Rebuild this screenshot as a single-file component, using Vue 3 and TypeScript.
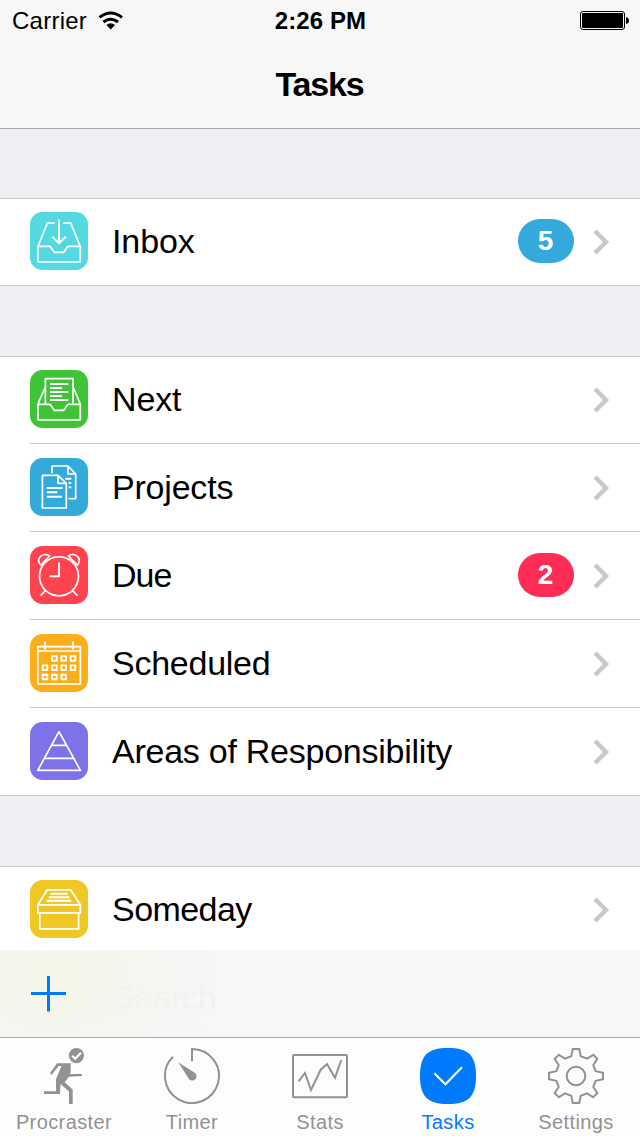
<script setup lang="ts">
interface Row {
  label: string
  color: string
  strokes: string
  bold?: string
  spacing: string
  badge?: number
  badgeColor?: string
}

const tray = 'M8 34.3H20L24.3 40.3H33.7L38 34.3H50.3V49.8H8Z'

const calendarCells = [
  [24.4, 24.4], [33.7, 24.4], [43, 24.4],
  [15, 33.7], [24.4, 33.7], [33.7, 33.7], [43, 33.7],
  [15, 43], [24.4, 43], [33.7, 43],
]
  .map(([x, y]) => `M${x - 2.3} ${y - 2.3}h4.6v4.6h-4.6Z`)
  .join('')

const groups: Row[][] = [
  [
    {
      label: 'Inbox', color: '#54d9e0', spacing: '-0.1px', badge: 5, badgeColor: '#34aadc',
      strokes: tray + 'M8 34.3L17.3 11.2H24.7M33.3 11.2H40.7L50.3 34.3',
      bold: 'M29 7.5V31M22.3 24.7L29 31.4L35.7 24.7',
    },
  ],
  [
    {
      label: 'Next', color: '#3fc438', spacing: '-0.15px',
      strokes: tray + 'M15.4 33.5V8.7H43V33.5M8 34L15.2 17M50.3 34L43.2 17',
      bold: 'M20 14H38.3M20 18H32M20 22H38.3M20 26H32M20 30H38.3',
    },
    {
      label: 'Projects', color: '#34aadc', spacing: '-0.2px',
      strokes: 'M12.4 17.3H28L36.3 25.3V50H12.4ZM28 17.3V25.3H36.3M22 15V8H38L45.7 16V40.7H38.7M38 8V16H45.7',
      bold: 'M16.8 30H32.5M16.8 34.3H27.3M16.8 38.7H32M35.3 20.7H41.3M38.7 25H41.3M38.7 29.3H41.3',
    },
    {
      label: 'Due', color: '#ff4450', spacing: '-1px', badge: 2, badgeColor: '#ff2d55',
      strokes:
        'M9.5 30.3a19.5 19.5 0 1 0 39 0a19.5 19.5 0 1 0 -39 0M16 44L10.6 49.7M42 44L47.4 49.7' +
        'M10.7 19.2C8.3 16.5 7.8 12.8 10.3 10.7C12.8 8 17 7.8 19.5 10Z' +
        'M47.3 19.2C49.7 16.5 50.2 12.8 47.7 10.7C45.2 8 41 7.8 38.5 10Z',
      bold: 'M29 16.5V30.3H19.5',
    },
    {
      label: 'Scheduled', color: '#ffae1b', spacing: '-0.25px',
      strokes: 'M7.9 12.7H50.4V49.8H7.9ZM7.9 17H50.4',
      bold: 'M15 7.5V15.5M43 7.5V15.5' + calendarCells,
    },
    {
      label: 'Areas of Responsibility', color: '#7d73e8', spacing: '-0.25px',
      strokes: 'M29 9.7L50.4 48.3H7.8ZM21.6 23.4H36.4M14.4 36.4H43.6',
    },
  ],
  [
    {
      label: 'Someday', color: '#efc825', spacing: '-0.55px',
      strokes: 'M7.9 24.8L17.3 9.8H40.7L50.3 24.8V32.8H7.9ZM7.9 24.8H50.3M9.8 32.8V48.8H48.6V32.8',
      bold: 'M20.3 13.7H37.7M18.7 17.2H39.3M16.7 20.7H41.3',
    },
  ],
]
</script>

<template>
  <div class="screen">
    <header class="header">
      <div class="status">
        <div class="carrier">
          <span>Carrier</span>
          <svg class="wifi" width="26" height="20" viewBox="0 0 26 20">
            <path d="M1.4 6.4Q12.7-2.4 24 6.4M5.4 11Q12.7 5.4 20 11" fill="none" stroke="#000" stroke-width="3" />
            <path d="M8.4 14Q12.7 10.6 17 14L12.7 18.6Z" />
          </svg>
        </div>
        <span class="clock">2:26 PM</span>
        <svg class="battery" width="50" height="20" viewBox="0 0 50 20">
          <rect x=".5" y=".5" width="44" height="18" rx="2.5" fill="none" stroke="#000" />
          <rect x="2" y="2" width="41" height="15" rx="1" />
          <path d="M46 6Q49 6.5 49 9.5T46 13Z" />
        </svg>
      </div>
      <h1 class="title">Tasks</h1>
    </header>

    <main class="list">
      <section v-for="(rows, g) in groups" :key="g" class="group">
        <div v-for="row in rows" :key="row.label" class="row">
          <svg class="icon" width="58" height="58" viewBox="0 0 58 58">
            <rect width="58" height="58" rx="12.5" :fill="row.color" />
            <path :d="row.strokes" class="thin" />
            <path v-if="row.bold" :d="row.bold" class="bold" />
          </svg>
          <div class="line">
            <span class="label" :style="{ letterSpacing: row.spacing }">{{ row.label }}</span>
            <span v-if="row.badge" class="badge" :style="{ background: row.badgeColor }">{{ row.badge }}</span>
            <svg class="chevron" width="18" height="26" viewBox="0 0 18 26">
              <path d="M2 2L13 13L2 24" fill="none" stroke="#c7c7cc" stroke-width="4.4" />
            </svg>
          </div>
        </div>
      </section>
    </main>

    <div class="toolbar">
      <svg class="plus" width="36" height="36" viewBox="0 0 36 36">
        <path d="M17.5 0V35.5M0 17.5H35" stroke="#007aff" stroke-width="3" />
      </svg>
      <span class="ghost">Search</span>
    </div>

    <nav class="tabs">
      <div class="tab">
        <svg width="56" height="56" viewBox="0 0 56 56">
          <path fill="#929292" d="M21 15.3H34.7V24.5L33.6 26H46V28L33 28.8L28.7 34.2L36.7 41.5V56H33V43.5L24.5 36L24 46H8V43.3H20V31L25.5 18H22.6L15.5 27L14 25.3Z" />
          <circle cx="40.4" cy="7.6" r="7.6" fill="#929292" />
          <path d="M36.2 7.8L39.2 10.8L45 4.8" fill="none" stroke="#fff" stroke-width="2.2" />
        </svg>
        <span class="name wide">Procraster</span>
      </div>
      <div class="tab">
        <svg width="56" height="56" viewBox="0 0 56 56">
          <path d="M28 13.3V1A27 27 0 1 1 9 8.8" fill="none" stroke="#929292" stroke-width="2" />
          <path d="M14.2 14.2L30 24.3A4.3 4.3 0 1 1 24.3 30Z" fill="#929292" />
        </svg>
        <span class="name">Timer</span>
      </div>
      <div class="tab">
        <svg width="56" height="56" viewBox="0 0 56 56">
          <rect x="1" y="7" width="54" height="42.3" rx="1" fill="none" stroke="#929292" stroke-width="2" />
          <path d="M6.6 33.4L13 25L19 42L28.7 21.7L35 16L43 29.8L49.3 12" fill="none" stroke="#929292" stroke-width="2" />
        </svg>
        <span class="name">Stats</span>
      </div>
      <div class="tab active">
        <svg width="56" height="56" viewBox="0 0 56 56">
          <path fill="#007aff" d="M0 28C0 7.5 7.5 0 28 0S56 7.5 56 28S48.5 56 28 56S0 48.5 0 28Z" />
          <path d="M14.3 25.3L25.4 36.3L42 19.3" fill="none" stroke="#fff" stroke-width="2" />
        </svg>
        <span class="name">Tasks</span>
      </div>
      <div class="tab">
        <svg width="56" height="56" viewBox="0 0 56 56">
          <g fill="none" stroke="#929292" stroke-width="2">
            <path d="M24.8 1H31.2L32.8 8.3L39 10.7L45.3 6.8L49.3 10.8L45.3 17L47.7 23.2L55 24.8V31.2L47.7 32.8L45.3 39L49.3 45.2L45.2 49.3L39 45.3L32.8 47.7L31.2 55H24.8L23.2 47.7L17 45.3L10.8 49.3L6.7 45.2L10.7 39L8.3 32.8L1 31.2V24.8L8.3 23.2L10.7 17L6.7 10.8L10.8 6.7L17 10.7L23.2 8.3Z" />
            <circle cx="28" cy="28" r="9.3" />
          </g>
        </svg>
        <span class="name">Settings</span>
      </div>
    </nav>
  </div>
</template>

<style scoped>
.screen {
  width: 640px;
  height: 1136px;
  display: flex;
  flex-direction: column;
  overflow: hidden;
  background: #efeff4;
  color: #000;
  font-family: "Liberation Sans", Arial, sans-serif;
}
.header {
  height: 129px;
  flex: none;
  box-sizing: border-box;
  background: #f7f7f7;
  border-bottom: 1px solid #a7a7ab;
}
.status {
  height: 40px;
  display: grid;
  grid-template-columns: 1fr auto 1fr;
  align-items: center;
  padding: 1px 11px 0 12px;
  box-sizing: border-box;
  font-size: 24px;
}
.carrier {
  display: flex;
  align-items: center;
  gap: 11px;
  letter-spacing: 0.25px;
}
.clock {
  padding-top: 1px;
  font-weight: bold;
  font-size: 24px;
  letter-spacing: 0.1px;
}
.battery {
  justify-self: end;
  margin-right: -1px;
}
.title {
  margin: 0;
  height: 88px;
  line-height: 89px;
  text-align: center;
  text-indent: -1px;
  font-size: 34px;
  letter-spacing: -1.2px;
}
.list {
  flex: 1;
  min-height: 0;
  overflow: hidden;
  padding-top: 69px;
}
.group {
  background: #fff;
  border-top: 1px solid #c8c7cc;
  border-bottom: 1px solid #c8c7cc;
  margin-bottom: 70px;
}
.row {
  height: 88px;
  box-sizing: border-box;
  display: flex;
  align-items: flex-end;
  padding-left: 30px;
}
.row:first-child,
.row:last-child {
  height: 87px;
}
.row:first-child:last-child {
  height: 86px;
}
.row:not(:last-child) {
  background: linear-gradient(#c8c7cc, #c8c7cc) 30px 100% / 100% 1px no-repeat;
  padding-bottom: 1px;
}
.icon {
  flex: none;
  margin-bottom: 15px;
}
.thin,
.bold {
  fill: none;
  stroke: #fff;
  stroke-width: 1.7;
  stroke-linejoin: round;
}
.bold {
  stroke-width: 1.9;
}
.line {
  flex: 1;
  height: 58px;
  margin-bottom: 15px;
  padding: 0 29px 0 24px;
  display: flex;
  align-items: center;
}
.label {
  flex: 1;
  font-size: 34px;
  line-height: 58px;
}
.badge {
  width: 56px;
  height: 44px;
  line-height: 44px;
  border-radius: 22px;
  margin-right: 19px;
  color: #fff;
  text-align: center;
  text-indent: -1px;
  font-size: 28px;
  font-weight: bold;
}
.chevron {
  position: relative;
  top: 1px;
}
.toolbar {
  flex: none;
  height: 87px;
  display: flex;
  align-items: center;
  padding-left: 31px;
  background: radial-gradient(ellipse 160px 110px at 55px 30px, #f5f6e9, #f4f6ef 45%, #f7f7f7);
}
.ghost {
  margin: 8px 0 0 45px;
  font-size: 34px;
  letter-spacing: -0.6px;
  color: #f2f2f1;
}
.tabs {
  flex: none;
  height: 99px;
  box-sizing: border-box;
  border-top: 1px solid #a9a9a9;
  background: #fdfdfd;
  display: grid;
  grid-template-columns: repeat(5, 128px);
}
.tab {
  display: flex;
  flex-direction: column;
  align-items: center;
  padding-top: 10px;
  color: #929292;
}
.active {
  color: #007aff;
}
.name {
  margin-top: 7px;
  font-size: 20px;
  line-height: 23px;
  letter-spacing: 0.4px;
}
</style>

<style>
body {
  margin: 0;
}
</style>
